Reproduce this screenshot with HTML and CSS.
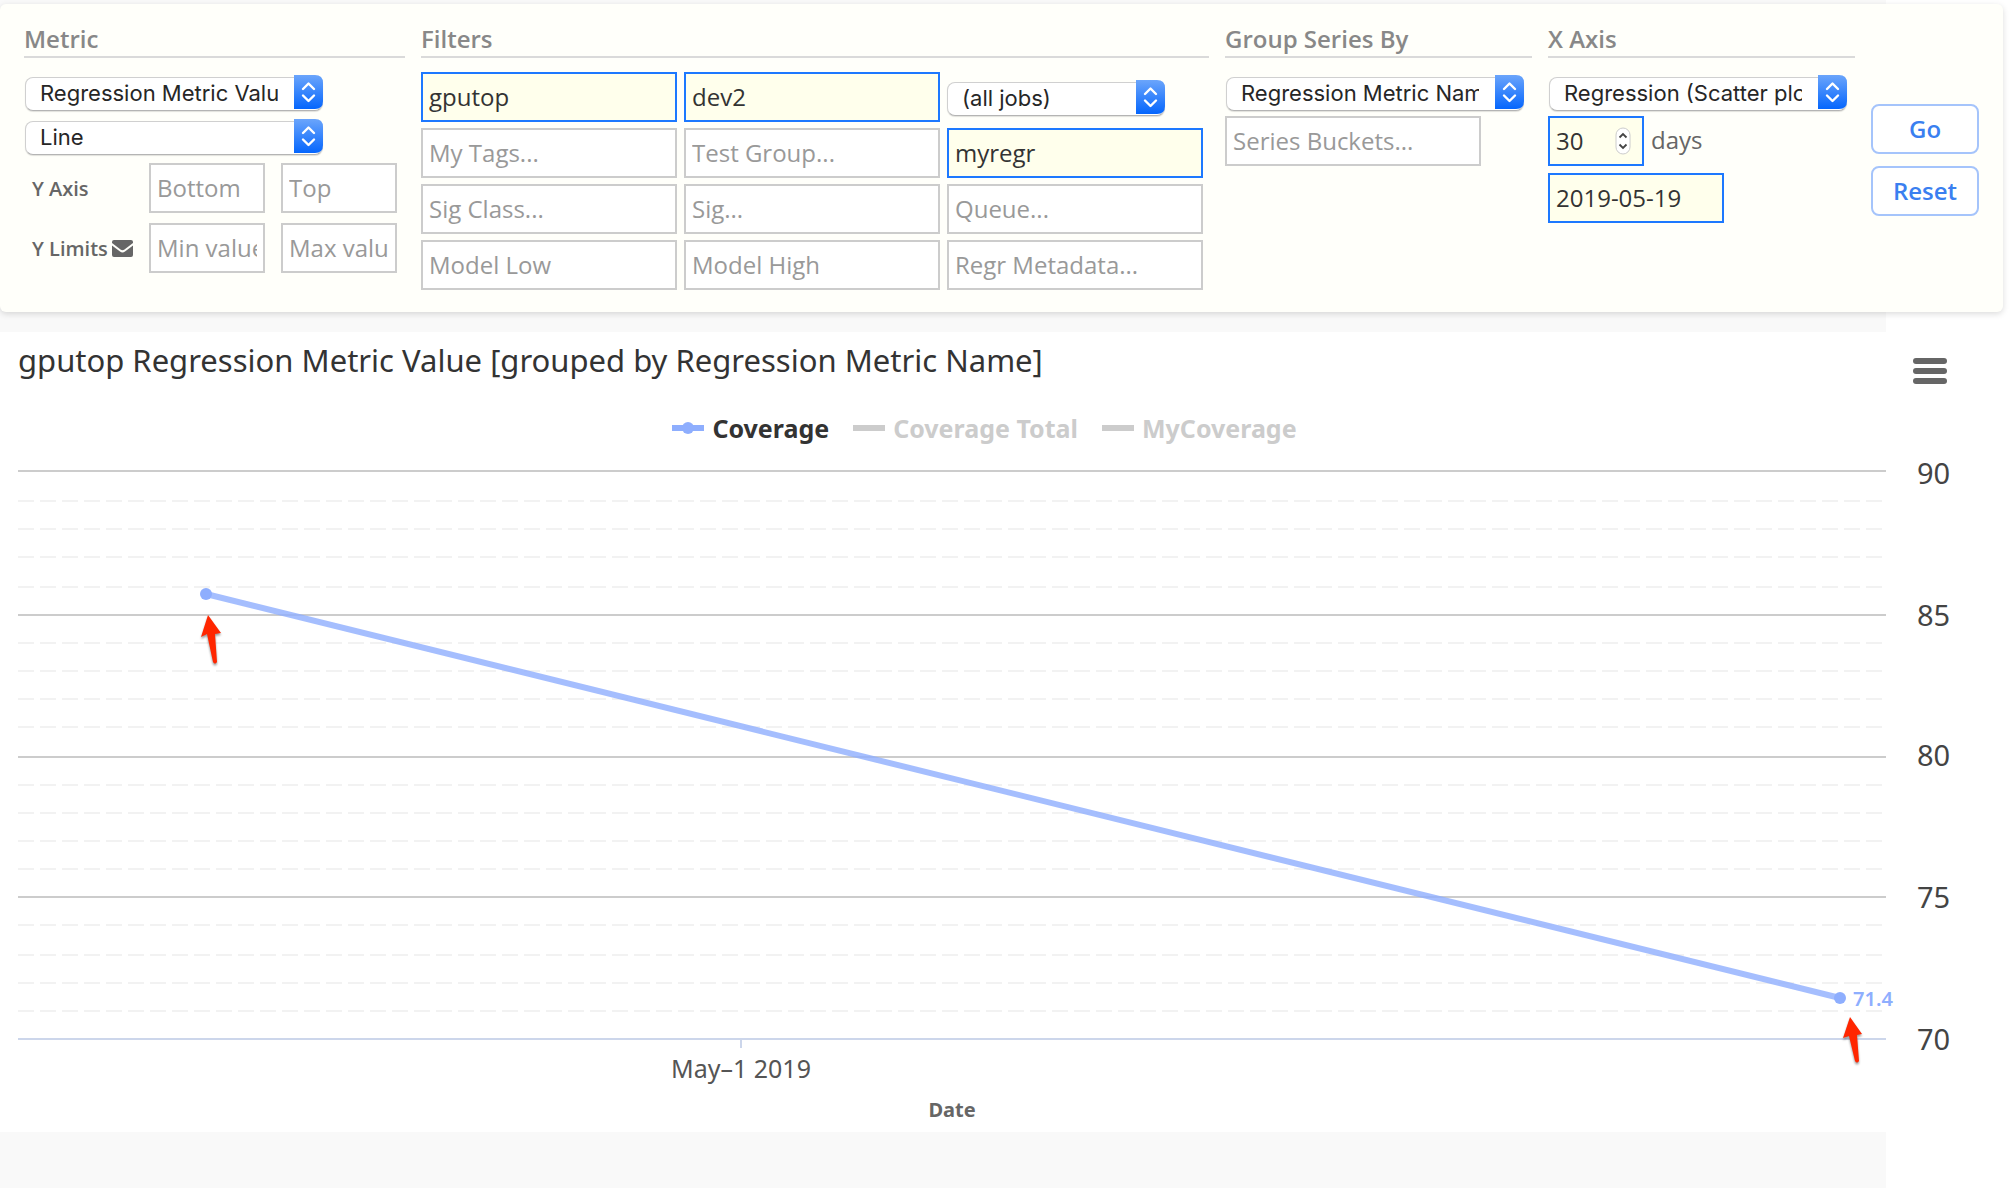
FILE: index.html
```
<!DOCTYPE html>
<html lang="en">
<head>
<meta charset="utf-8">
<title>Regression Metric Value</title>
<meta name="viewport" content="width=device-width, initial-scale=1">
<link rel="stylesheet" href="styles.css">
</head>
<body>
<svg class="defs" aria-hidden="true">
  <defs>
    <linearGradient id="blue" x1="0" y1="0" x2="0" y2="1">
      <stop offset="0" stop-color="#6ba5fb"/>
      <stop offset="1" stop-color="#0566fd"/>
    </linearGradient>
    <symbol id="updown" viewBox="0 0 29 34">
      <path d="M0 0H21Q29 0 29 8V26Q29 34 21 34H0Z" fill="url(#blue)"/>
      <path d="M9 14L14.500 8.500L20 14M9 20.500L14.500 26L20 20.500" fill="none" stroke="#fff" stroke-width="2.400" stroke-linecap="round" stroke-linejoin="round"/>
    </symbol>
  </defs>
</svg>
<form class="panel">
  <section class="group">
    <h2>Metric</h2>
    <div class="stack roomy">
      <div class="select"><select aria-label="Metric"><option>Regression Metric Value</option></select><svg><use href="#updown"/></svg></div>
      <div class="select"><select aria-label="Chart type"><option>Line</option></select><svg><use href="#updown"/></svg></div>
      <div class="limits">
        <label for="bottom">Y Axis</label>
        <input id="bottom" type="text" placeholder="Bottom">
        <input type="text" placeholder="Top" aria-label="Y axis top">
        <label for="min">Y Limits
          <svg class="mail" viewBox="0 0 21 17"><path d="M2 0H19Q21 0 21 2V3L12.500 9.500Q10.500 11 8.500 9.500L0 3V2Q0 0 2 0Z"/><path d="M0 5.500L8 11.500Q10.500 13.500 13 11.500L21 5.500V15Q21 17 19 17H2Q0 17 0 15Z"/></svg></label>
        <input id="min" type="text" placeholder="Min value">
        <input type="text" placeholder="Max value" aria-label="Max value">
      </div>
    </div>
  </section>
  <section class="group">
    <h2>Filters</h2>
    <div class="filters">
      <input class="set" type="text" value="gputop" aria-label="Product">
      <input class="set" type="text" value="dev2" aria-label="Branch">
      <div class="select short"><select aria-label="Jobs"><option>(all jobs)</option></select><svg><use href="#updown"/></svg></div>
      <input type="text" placeholder="My Tags..." aria-label="My tags">
      <input type="text" placeholder="Test Group..." aria-label="Test group">
      <input class="set" type="text" value="myregr" aria-label="Regression">
      <input type="text" placeholder="Sig Class..." aria-label="Sig class">
      <input type="text" placeholder="Sig..." aria-label="Sig">
      <input type="text" placeholder="Queue..." aria-label="Queue">
      <input type="text" placeholder="Model Low" aria-label="Model low">
      <input type="text" placeholder="Model High" aria-label="Model high">
      <input type="text" placeholder="Regr Metadata..." aria-label="Regression metadata">
    </div>
  </section>
  <section class="group">
    <h2>Group Series By</h2>
    <div class="stack">
      <div class="select"><select aria-label="Group series by"><option>Regression Metric Name</option></select><svg><use href="#updown"/></svg></div>
      <input class="wide" type="text" placeholder="Series Buckets..." aria-label="Series buckets">
    </div>
  </section>
  <section class="group">
    <h2>X Axis</h2>
    <div class="stack">
      <div class="select"><select aria-label="X axis"><option>Regression (Scatter plot)</option></select><svg><use href="#updown"/></svg></div>
      <div class="days">
        <span class="number"><input id="days" class="set" type="number" value="30"><svg viewBox="0 0 16 28"><rect x="1" y="1" width="14" height="26" rx="7" fill="#fff" stroke="#ccc"/><path d="M4.500 10.500L8 7L11.500 10.500M4.500 17.500L8 21L11.500 17.500" fill="none" stroke="#444" stroke-width="1.800"/></svg></span>
        <label for="days">days</label>
      </div>
      <input class="set date" type="text" value="2019-05-19" aria-label="End date">
    </div>
  </section>
  <div class="actions">
    <button type="submit">Go</button>
    <button type="reset">Reset</button>
  </div>
</form>

<main class="chart">
  <header>
    <h1>gputop Regression Metric Value [grouped by Regression Metric Name]</h1>
    <button class="menu" type="button" aria-label="Chart menu"><i></i><i></i><i></i></button>
  </header>
  <div class="legend">
    <button type="button"><svg viewBox="0 0 32 12"><path d="M0 6H32" stroke="#8eaefe" stroke-width="6"/><circle cx="16" cy="6" r="6" fill="#8eaefe"/></svg>Coverage</button>
    <button type="button" class="off"><svg viewBox="0 0 32 12"><path d="M0 6H32" stroke="#ccc" stroke-width="6"/></svg>Coverage Total</button>
    <button type="button" class="off"><svg viewBox="0 0 32 12"><path d="M0 6H32" stroke="#ccc" stroke-width="6"/></svg>MyCoverage</button>
  </div>
  <svg class="plot" viewBox="0 444 2016 688" role="img" aria-label="Coverage by date">
    <path class="minor" d="M18 501H1886M18 529H1886M18 557H1886M18 587H1886M18 643H1886M18 671H1886M18 699H1886M18 727H1886M18 785H1886M18 813H1886M18 841H1886M18 869H1886M18 925H1886M18 955H1886M18 983H1886M18 1011H1886"/>
    <path class="major" d="M18 471H1886M18 615H1886M18 757H1886M18 897H1886"/>
    <path class="axis" d="M18 1039H1886M741 1039V1048"/>
    <path class="series" d="M206 594L1840 998"/>
    <circle class="point" cx="206" cy="594" r="6"/>
    <circle class="point" cx="1840" cy="998" r="6"/>
    <text class="value" x="1853" y="1006">71.4</text>
    <g class="ticks">
      <text x="1917" y="484">90</text>
      <text x="1917" y="626">85</text>
      <text x="1917" y="766">80</text>
      <text x="1917" y="908">75</text>
      <text x="1917" y="1050">70</text>
    </g>
    <text class="day" x="741" y="1078">May–1 2019</text>
    <text class="title" x="952" y="1117">Date</text>
    <path class="arrow" d="M208 615L221 633L215 634L217 662Q215 665 213 662L207 634L201 637Z"/>
    <path class="arrow" d="M1850 1017L1862 1034L1857 1035L1859 1061Q1857 1064 1855 1061L1849 1036L1843 1038Z"/>
  </svg>
</main>
</body>
</html>
```

FILE: styles.css
```
* { box-sizing: border-box; }

body {
  margin: 0;
  min-height: 100vh;
  padding-top: 4px;
  font-family: "Open Sans", "Noto Sans", sans-serif;
  font-size: 24px;
  color: #333;
  background: #fff linear-gradient(#f9f9f9, #f9f9f9) no-repeat 0 0 / calc(100% - 130px) 100%;
}

.defs { position: absolute; width: 0; height: 0; }

.panel {
  display: grid;
  grid-template-columns: 381fr 788fr 307fr 307fr auto;
  gap: 16px;
  margin-right: 13px;
  padding: 20px 24px 22px;
  border-radius: 6px;
  background: #fffffa;
  box-shadow: 0 2px 6px rgba(0, 0, 0, 0.14);
}

h2 {
  margin: 0 0 14px;
  padding-bottom: 2px;
  border-bottom: 2px solid #dadada;
  font-size: 24px;
  line-height: 30px;
  font-weight: 600;
  color: #888;
}

.stack {
  display: flex;
  flex-direction: column;
  align-items: flex-start;
  gap: 7px;
  padding-top: 3px;
}

.roomy { gap: 10px; }

input {
  width: 100%;
  height: 50px;
  padding: 0 6px 2px;
  border: 2px solid #ccc;
  border-radius: 0;
  background: #fff;
  font: inherit;
  color: #333;
}

input::placeholder { color: #999; opacity: 1; }

input.set { border-color: #1d78ff; background: #ffffec; }

.select { position: relative; width: 298px; height: 34px; margin: 0 1px; }
.select.short { width: 218px; align-self: center; margin: 0; }

.select select {
  appearance: none;
  width: 100%;
  height: 100%;
  padding: 0 44px 2px 14px;
  border: 1px solid #d0d0d0;
  border-bottom-color: #b4b4b4;
  border-radius: 8px;
  background: #fff;
  box-shadow: 0 1px 1px rgba(0, 0, 0, 0.12);
  font: 22px Inter, "Liberation Sans", sans-serif;
  color: #262626;
  text-overflow: clip;
}

.select svg {
  position: absolute;
  top: 0;
  right: 0;
  width: 29px;
  height: 34px;
  pointer-events: none;
}

.limits {
  display: grid;
  grid-template-columns: 109px 116px 116px;
  gap: 10px 16px;
  align-items: center;
}

.limits label {
  display: flex;
  align-items: center;
  gap: 4px;
  padding-left: 8px;
  font-size: 20px;
  font-weight: 600;
  color: #666;
  white-space: nowrap;
}

.mail { flex: none; width: 21px; height: 17px; fill: #666; }

.filters { display: grid; grid-template-columns: repeat(3, 256px); gap: 6px 7px; }

.wide { width: 256px; }
.date { width: 176px; }

.days { display: flex; align-items: center; gap: 7px; color: #666; }
.days label { padding-bottom: 4px; }
.number { position: relative; width: 96px; height: 50px; }
.number input { appearance: textfield; }
.number input::-webkit-inner-spin-button { display: none; }
.number svg { position: absolute; top: 11px; right: 13px; width: 16px; height: 28px; }

.actions { display: flex; flex-direction: column; gap: 12px; padding-top: 80px; }

.actions button {
  width: 108px;
  height: 50px;
  padding: 0 0 2px;
  border: 2px solid #a5c4fb;
  border-radius: 8px;
  background: #fff;
  font: inherit;
  font-weight: 600;
  color: #3a7ff0;
}

.chart {
  margin-top: 20px;
  background: #fff;
  font-family: "Noto Sans", "Open Sans", sans-serif;
}

.chart header {
  display: flex;
  align-items: flex-end;
  justify-content: space-between;
  height: 52px;
  padding: 0 69px 0 18px;
}

h1 { margin: 0 0 4px; font-size: 31px; line-height: 40px; font-weight: 400; }

.menu {
  display: flex;
  flex-direction: column;
  gap: 4px;
  width: 34px;
  padding: 0;
  border: 0;
  background: none;
}

.menu i { height: 6px; border-radius: 3px; background: #666; }

.legend {
  display: flex;
  justify-content: center;
  gap: 24px;
  margin-top: 28px;
  padding-right: 47px;
}

.legend button {
  display: flex;
  align-items: center;
  gap: 8px;
  padding: 0;
  border: 0;
  background: none;
  font: inherit;
  font-size: 25px;
  line-height: 32px;
  font-weight: 700;
  color: #333;
}

.legend .off { color: #ccc; }
.legend svg { width: 32px; height: 12px; }

.plot { display: block; width: 100%; }
.plot path { fill: none; stroke-width: 2; }
.plot .minor { stroke: #f2f2f2; stroke-dasharray: 16 6; }
.plot .major { stroke: #ccc; }
.plot .axis { stroke: #ccd6eb; }
.plot .series { stroke: #8eaefe; stroke-width: 6; stroke-opacity: 0.8; }
.plot .arrow { fill: #ff2600; filter: drop-shadow(0 2px 1px rgba(0, 0, 0, 0.4)); }
.point { fill: #8eaefe; }
.value { font-size: 20px; font-weight: 600; fill: #8eaefe; }
.ticks { font-size: 29px; fill: #444; }
.day { font-size: 25px; fill: #555; text-anchor: middle; }
.title { font-size: 20px; font-weight: 700; fill: #666; text-anchor: middle; }
```
